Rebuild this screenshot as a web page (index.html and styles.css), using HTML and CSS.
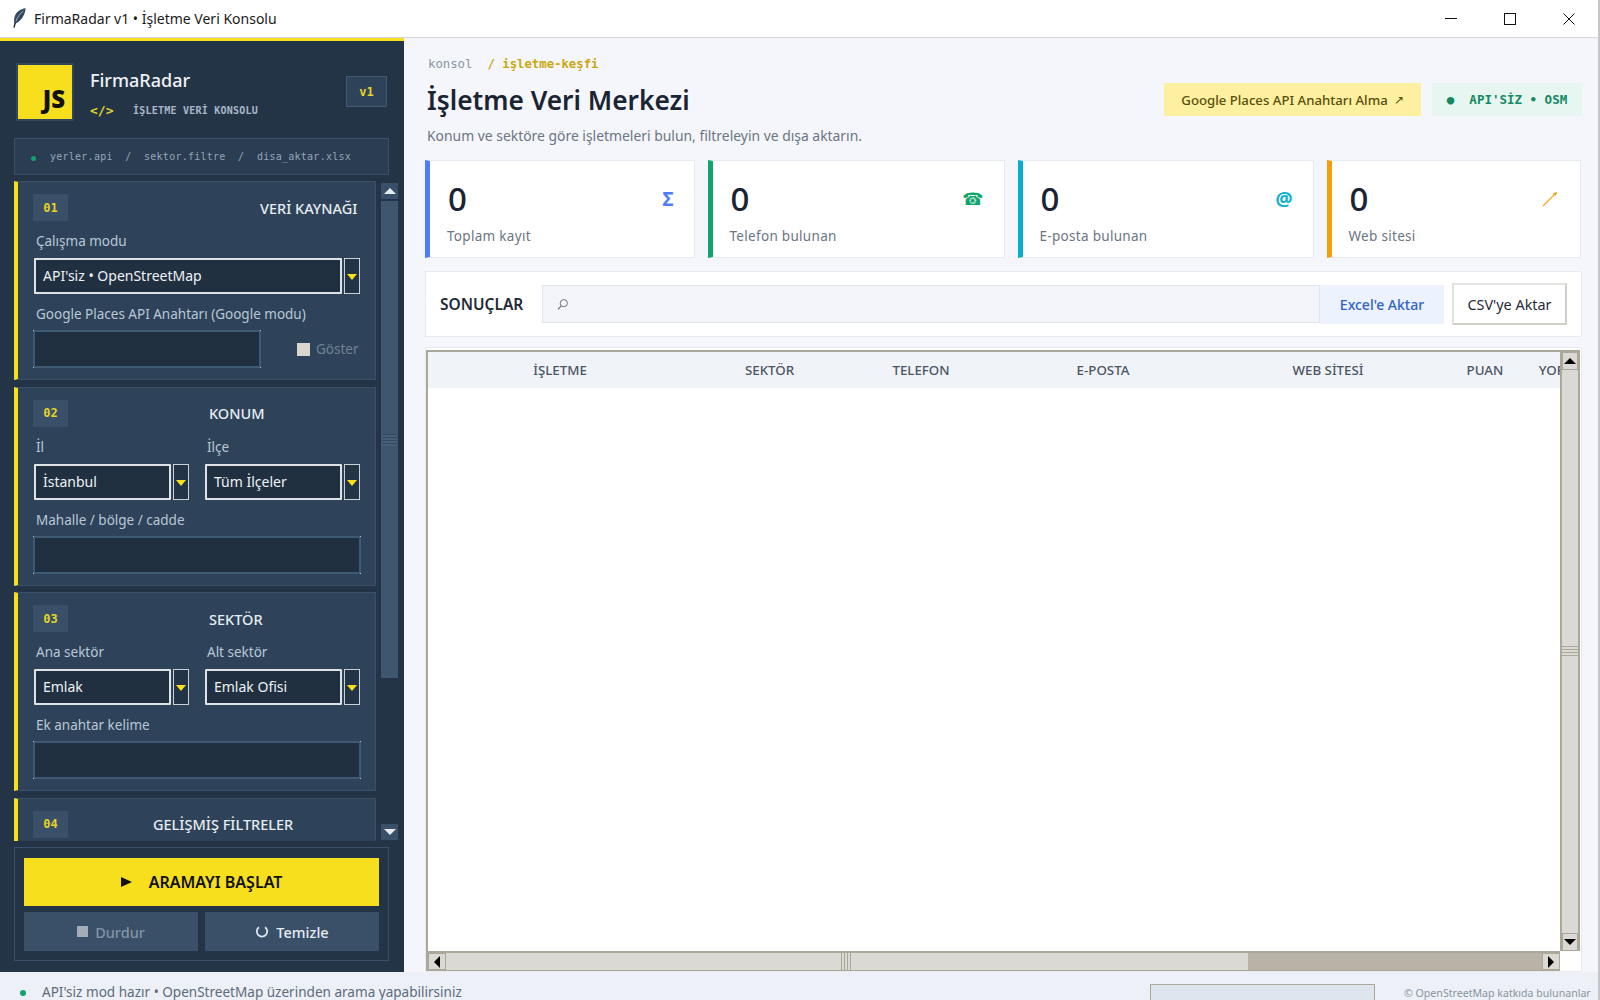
FILE: index.html
```html
<!DOCTYPE html>
<html lang="tr">
<head>
    <meta charset="UTF-8">
    <meta name="viewport" content="width=device-width, initial-scale=1.0">
    <title>FirmaRadar v1</title>
    <link rel="stylesheet" href="styles.css">
</head>
<body>
<div class="window">

    <!-- pencere başlığı -->
    <header class="titlebar">
        <svg class="feather" width="13" height="20" viewBox="0 0 13 20">
            <path d="M12.6 0.3C7.5 0.8 2.8 4.2 1.4 9.4 0.8 11.8 1 14 1.8 15.4 3 15.6 4.6 14.8 5.8 13.6 9.6 10.6 12.2 5.6 12.6 0.3Z" fill="#34485c"/>
            <path d="M10.4 3C7 5.6 4.2 9.2 2.9 13.4" stroke="#a9c0d6" stroke-width="0.9" fill="none"/>
            <path d="M2.4 14.2L1 19.6" stroke="#1c2630" stroke-width="1.4" fill="none"/>
        </svg>
        <span class="titlebar-text">FirmaRadar v1 • İşletme Veri Konsolu</span>
        <div class="caption">
            <div class="cap-btn"><span class="cap-min"></span></div>
            <div class="cap-btn"><span class="cap-max"></span></div>
            <div class="cap-btn">
                <svg width="12" height="12" viewBox="0 0 12 12"><path d="M0.5 0.5L11.5 11.5M11.5 0.5L0.5 11.5" stroke="#111" stroke-width="1" fill="none"/></svg>
            </div>
        </div>
    </header>

    <div class="app">
        <!-- sol panel -->
        <aside class="sidebar">
            <div class="brand">
                <div class="logo"><span>JS</span></div>
                <div class="brand-text">
                    <div class="brand-name">FirmaRadar</div>
                    <div class="brand-sub"><span class="brand-code">&lt;/&gt;</span><span class="brand-label">İŞLETME VERİ KONSOLU</span></div>
                </div>
                <div class="version">v1</div>
            </div>

            <div class="path-box"><span class="path-dot"></span><span class="path-text">yerler.api  /  sektor.filtre  /  disa_aktar.xlsx</span></div>

            <div class="side-scroll">
                <div class="sections">
                    <section class="sec">
                        <div class="sec-head">
                            <span class="sec-num">01</span>
                            <h3 class="sec-title sec-title-source">VERİ KAYNAĞI</h3>
                        </div>
                        <label class="lbl">Çalışma modu</label>
                        <div class="combo">
                            <div class="combo-field">API'siz • OpenStreetMap</div>
                            <div class="combo-arrow"></div>
                        </div>
                        <label class="lbl lbl-next">Google Places API Anahtarı (Google modu)</label>
                        <div class="key-row">
                            <div class="entry entry-key"></div>
                            <div class="check"><span class="check-box"></span><span class="check-text">Göster</span></div>
                        </div>
                    </section>

                    <section class="sec">
                        <div class="sec-head">
                            <span class="sec-num">02</span>
                            <h3 class="sec-title sec-title-mid">KONUM</h3>
                        </div>
                        <div class="two-col">
                            <div>
                                <label class="lbl">İl</label>
                                <div class="combo">
                                    <div class="combo-field">İstanbul</div>
                                    <div class="combo-arrow"></div>
                                </div>
                            </div>
                            <div>
                                <label class="lbl">İlçe</label>
                                <div class="combo">
                                    <div class="combo-field">Tüm İlçeler</div>
                                    <div class="combo-arrow"></div>
                                </div>
                            </div>
                        </div>
                        <label class="lbl lbl-next">Mahalle / bölge / cadde</label>
                        <div class="entry"></div>
                    </section>

                    <section class="sec">
                        <div class="sec-head">
                            <span class="sec-num">03</span>
                            <h3 class="sec-title sec-title-mid">SEKTÖR</h3>
                        </div>
                        <div class="two-col">
                            <div>
                                <label class="lbl">Ana sektör</label>
                                <div class="combo">
                                    <div class="combo-field">Emlak</div>
                                    <div class="combo-arrow"></div>
                                </div>
                            </div>
                            <div>
                                <label class="lbl">Alt sektör</label>
                                <div class="combo">
                                    <div class="combo-field">Emlak Ofisi</div>
                                    <div class="combo-arrow"></div>
                                </div>
                            </div>
                        </div>
                        <label class="lbl lbl-next">Ek anahtar kelime</label>
                        <div class="entry"></div>
                    </section>

                    <section class="sec">
                        <div class="sec-head">
                            <span class="sec-num">04</span>
                            <h3 class="sec-title sec-title-filter">GELİŞMİŞ FİLTRELER</h3>
                        </div>
                    </section>
                </div>

                <div class="side-bar">
                    <div class="side-btn"><span class="tri-up"></span></div>
                    <div class="side-track">
                        <div class="side-thumb"><span class="side-grip"></span></div>
                    </div>
                    <div class="side-btn"><span class="tri-down"></span></div>
                </div>
            </div>

            <div class="actions">
                <button class="btn-start"><span class="play"></span>ARAMAYI BAŞLAT</button>
                <div class="action-row">
                    <button class="btn-side btn-stop"><span class="stop-box"></span>Durdur</button>
                    <button class="btn-side">
                        <svg width="14" height="14" viewBox="0 0 14 14"><path d="M4 2.2A5.2 5.2 0 1 0 10 2.2" stroke="#dce5ee" stroke-width="1.8" fill="none"/></svg>
                        Temizle
                    </button>
                </div>
            </div>
        </aside>

        <!-- ana içerik -->
        <main class="content">
            <div class="top">
                <div class="top-left">
                    <div class="crumb"><span class="crumb-root">konsol</span><span class="crumb-page">/ işletme-keşfi</span></div>
                    <h1 class="page-title">İşletme Veri Merkezi</h1>
                    <p class="page-sub">Konum ve sektöre göre işletmeleri bulun, filtreleyin ve dışa aktarın.</p>
                </div>
                <div class="top-right">
                    <a class="key-link">Google Places API Anahtarı Alma <span class="key-arrow">↗</span></a>
                    <div class="mode-tag">●  API'SİZ • OSM</div>
                </div>
            </div>

            <div class="cards">
                <div class="card card-blue">
                    <div><div class="card-num">0</div><div class="card-lbl">Toplam kayıt</div></div>
                    <span class="card-icon icon-blue">Σ</span>
                </div>
                <div class="card card-green">
                    <div><div class="card-num">0</div><div class="card-lbl">Telefon bulunan</div></div>
                    <span class="card-icon icon-green">☎</span>
                </div>
                <div class="card card-cyan">
                    <div><div class="card-num">0</div><div class="card-lbl">E-posta bulunan</div></div>
                    <span class="card-icon icon-cyan">@</span>
                </div>
                <div class="card card-orange">
                    <div><div class="card-num">0</div><div class="card-lbl">Web sitesi</div></div>
                    <svg class="card-svg" width="16" height="16" viewBox="0 0 16 16"><path d="M1 15L14 2" stroke="#f5a623" stroke-width="1.2" fill="none"/><path d="M15.2 0.8L11 2.4L13.6 5Z" fill="#f59e0b"/></svg>
                </div>
            </div>

            <div class="toolbar">
                <span class="toolbar-title">SONUÇLAR</span>
                <div class="search">
                    <svg width="13" height="13" viewBox="0 0 13 13"><circle cx="7.8" cy="5.2" r="3.6" stroke="#6b7583" stroke-width="1" fill="none"/><path d="M5.2 7.9L2 11.4" stroke="#6b7583" stroke-width="1.2" fill="none"/></svg>
                </div>
                <button class="btn-excel">Excel'e Aktar</button>
                <button class="btn-csv">CSV'ye Aktar</button>
            </div>

            <div class="table-panel">
                <div class="table-top">
                    <div class="tree">
                        <div class="tree-head">
                            <span class="col col-name">İŞLETME</span>
                            <span class="col col-sector">SEKTÖR</span>
                            <span class="col col-phone">TELEFON</span>
                            <span class="col col-mail">E-POSTA</span>
                            <span class="col col-web">WEB SİTESİ</span>
                            <span class="col col-score">PUAN</span>
                            <span class="col col-review">YORUM</span>
                        </div>
                    </div>
                    <div class="vbar">
                        <div class="tk-btn"><span class="tk-up"></span></div>
                        <div class="vbar-thumb"><span class="vbar-grip"></span></div>
                        <div class="tk-btn"><span class="tk-down"></span></div>
                    </div>
                </div>
                <div class="table-bottom">
                    <div class="hbar">
                        <div class="tk-btn"><span class="tk-left"></span></div>
                        <div class="hbar-thumb"><span class="hbar-grip"></span></div>
                        <div class="hbar-trough"></div>
                        <div class="tk-btn"><span class="tk-right"></span></div>
                    </div>
                    <div class="corner"></div>
                </div>
            </div>
        </main>
    </div>

    <footer class="statusbar">
        <span class="status-dot"></span>
        <span class="status-text">API'siz mod hazır • OpenStreetMap üzerinden arama yapabilirsiniz</span>
        <div class="progress"></div>
        <span class="status-copy">© OpenStreetMap katkıda bulunanlar</span>
    </footer>
</div>
</body>
</html>
```

FILE: styles.css
```css
*{
    box-sizing: border-box;
    padding: 0;
    margin: 0;
}
html, body{
    height: 100%;
    overflow: hidden;
}
body{
    font-family: "Noto Sans", "Open Sans", sans-serif;
    background-color: #f4f6fb;
}
button{
    font-family: inherit;
    border: 0;
}
.window{
    height: 1000px;
    display: flex;
    flex-direction: column;
    border-right: 2px solid #c4c6ca;
    overflow: hidden;
}

/* başlık */
.titlebar{
    height: 38px;
    flex: none;
    display: flex;
    align-items: center;
    background-color: #fff;
    border-bottom: 1px solid #d5d7db;
    padding-left: 13px;
}
.feather{
    margin-right: 8px;
    margin-top: -2px;
}
.titlebar-text{
    font-size: 14px;
    color: #1a1a1a;
}
.caption{
    margin-left: auto;
    display: flex;
}
.cap-btn{
    width: 59px;
    height: 37px;
    display: flex;
    align-items: center;
    justify-content: center;
}
.cap-min{
    width: 12px;
    height: 1px;
    background-color: #111;
}
.cap-max{
    width: 12px;
    height: 12px;
    border: 1px solid #111;
}

.app{
    flex: 1;
    min-height: 0;
    display: flex;
}

/* sol panel */
.sidebar{
    width: 404px;
    flex: none;
    background-color: #243447;
    border-top: 3px solid #f7df1e;
    padding: 22px 15px 0 14px;
    display: flex;
    flex-direction: column;
}
.brand{
    height: 58px;
    display: flex;
    flex: none;
}
.logo{
    width: 58px;
    height: 58px;
    margin-left: 2px;
    border: 2px solid #31465c;
    background-color: #f7df1e;
    display: flex;
    align-items: flex-end;
    justify-content: flex-end;
    padding: 0 7px 10px 0;
}
.logo span{
    font-size: 24px;
    line-height: 20px;
    font-weight: 900;
    color: #111;
}
.brand-text{
    margin-left: 16px;
}
.brand-name{
    font-size: 18px;
    line-height: 24px;
    margin-top: 5px;
    font-weight: 500;
    color: #eef2f6;
}
.brand-sub{
    display: flex;
    align-items: center;
    margin-top: 11px;
}
.brand-code{
    font-family: "DejaVu Sans Mono", monospace;
    font-size: 13px;
    font-weight: 700;
    color: #e3d32a;
    width: 43px;
}
.brand-label{
    font-family: "DejaVu Sans Mono", monospace;
    font-size: 10px;
    font-weight: 700;
    letter-spacing: 0.23px;
    color: #a9b8c8;
}
.version{
    margin-left: auto;
    margin-right: 2px;
    margin-top: 13px;
    width: 41px;
    height: 31px;
    border: 1px solid #3f5a75;
    background-color: #2e4359;
    color: #e3d32a;
    font-family: "DejaVu Sans Mono", monospace;
    font-size: 12px;
    font-weight: 700;
    display: flex;
    align-items: center;
    justify-content: center;
}
.path-box{
    flex: none;
    margin-top: 17px;
    height: 37px;
    border: 1px solid #3a5068;
    background-color: #2a3d52;
    display: flex;
    align-items: center;
    padding-left: 16px;
}
.path-dot{
    width: 5px;
    height: 5px;
    margin-top: 4px;
    margin-right: 14px;
    background-color: #12a26c;
    border-radius: 50%;
}
.path-text{
    font-family: "DejaVu Sans Mono", monospace;
    font-size: 10px;
    letter-spacing: 0.25px;
    white-space: pre;
    color: #93a6b9;
}
.side-scroll{
    flex: none;
    margin-top: 6px;
    width: 384px;
    height: 660px;
    display: flex;
}
.sections{
    width: 362px;
    flex: none;
    height: 660px;
    overflow: hidden;
    display: flex;
    flex-direction: column;
    gap: 6.5px;
}
.sec{
    flex: none;
    height: 199px;
    background-color: #2e4359;
    border: 1px solid #3a5068;
    border-left: 4px solid #f7df1e;
    padding: 12px 14px 0 15px;
}
.sec-head{
    display: flex;
    align-items: center;
    height: 27px;
    margin-bottom: 11px;
}
.sec-num{
    width: 35px;
    height: 27px;
    background-color: #3a5068;
    color: #e3d32a;
    font-family: "DejaVu Sans Mono", monospace;
    font-size: 12px;
    font-weight: 700;
    display: flex;
    align-items: center;
    justify-content: center;
}
.sec-title{
    font-size: 14.5px;
    font-weight: 500;
    white-space: nowrap;
    color: #e6ecf2;
}
.sec-title-source{
    margin-left: 192px;
}
.sec-title-mid{
    margin-left: 141px;
}
.sec-title-filter{
    margin-left: 85px;
}
.lbl{
    display: block;
    height: 18px;
    line-height: 18px;
    font-size: 13.5px;
    padding-left: 3px;
    color: #b9c7d6;
    margin-bottom: 8px;
}
.lbl-next{
    margin-top: 11px;
    margin-bottom: 7px;
}
.combo{
    display: flex;
    height: 36px;
    margin: 0 1px;
}
.combo-field{
    flex: 1;
    min-width: 0;
    border: 2px solid #dfe3e6;
    border-radius: 1px;
    background-color: #203040;
    color: #eef2f6;
    font-size: 14px;
    line-height: 32px;
    padding-left: 7px;
}
.combo-arrow{
    width: 16px;
    margin-left: 2px;
    flex: none;
    border: 1px solid #c9d0d6;
    background-color: #243447;
    position: relative;
}
.combo-arrow::after{
    content: "";
    position: absolute;
    left: 2px;
    top: 15px;
    border-left: 5px solid transparent;
    border-right: 5px solid transparent;
    border-top: 6px solid #f7df1e;
}
.entry{
    height: 38px;
    border: 2px solid #3f5a75;
    background-color: #203040;
    position: relative;
}
/* köşelerdeki açık noktalar */
.entry::after{
    content: "";
    position: absolute;
    inset: -2px;
    background:
        linear-gradient(#b4c0cc, #b4c0cc) left top / 1px 1px no-repeat,
        linear-gradient(#b4c0cc, #b4c0cc) right top / 1px 1px no-repeat,
        linear-gradient(#b4c0cc, #b4c0cc) left bottom / 1px 1px no-repeat,
        linear-gradient(#b4c0cc, #b4c0cc) right bottom / 1px 1px no-repeat;
}
.key-row{
    display: flex;
    align-items: center;
}
.entry-key{
    width: 228px;
}
.check{
    margin-left: 36px;
    display: flex;
    align-items: center;
    gap: 6px;
}
.check-box{
    width: 13px;
    height: 13px;
    background-color: #d9d6d0;
}
.check-text{
    font-size: 13.5px;
    color: #6f8192;
}
.two-col{
    display: grid;
    grid-template-columns: 1fr 1fr;
    gap: 14px;
}

/* panel kaydırma çubuğu */
.side-bar{
    margin-left: 5px;
    width: 17px;
    display: flex;
    flex-direction: column;
    padding-top: 2px;
    padding-bottom: 1px;
}
.side-btn{
    height: 16px;
    flex: none;
    background-color: #3a5068;
    display: flex;
    align-items: center;
    justify-content: center;
}
.tri-up, .tri-down{
    width: 0;
    height: 0;
    border-left: 6px solid transparent;
    border-right: 6px solid transparent;
}
.tri-up{
    border-bottom: 6px solid #e6ebef;
}
.tri-down{
    border-top: 6px solid #e6ebef;
}
.side-track{
    flex: 1;
    padding-top: 2px;
}
.side-thumb{
    height: 477px;
    background-color: #3e576f;
    display: flex;
    align-items: center;
    justify-content: center;
}
.side-grip{
    width: 15px;
    height: 12px;
    background: repeating-linear-gradient(#33495f 0 1px, #46607a 1px 3px);
}

/* aksiyon kutusu */
.actions{
    flex: none;
    margin-top: 6px;
    height: 114px;
    border: 1px solid #3a5068;
    padding: 10px 9px 9px;
}
.btn-start{
    width: 100%;
    height: 48px;
    background-color: #f7df1e;
    color: #111;
    font-size: 16px;
    font-weight: 600;
    display: flex;
    align-items: center;
    justify-content: center;
}
.play{
    width: 0;
    height: 0;
    margin-right: 17px;
    border-top: 5px solid transparent;
    border-bottom: 5px solid transparent;
    border-left: 11px solid #111;
}
.action-row{
    margin-top: 6px;
    display: grid;
    grid-template-columns: 1fr 1fr;
    gap: 7px;
}
.btn-side{
    height: 39px;
    background-color: #3a5068;
    color: #e6ecf2;
    font-size: 14.5px;
    font-weight: 500;
    display: flex;
    align-items: center;
    justify-content: center;
    gap: 7px;
}
.btn-stop{
    color: #8394a5;
}
.stop-box{
    width: 11px;
    height: 11px;
    background-color: #a3adb8;
}

/* ana içerik */
.content{
    flex: 1;
    min-width: 0;
    padding: 0 16px 0 21px;
    display: flex;
    flex-direction: column;
}
.top{
    height: 122px;
    flex: none;
    display: flex;
    justify-content: space-between;
}
.crumb{
    margin-top: 18px;
    padding-left: 3px;
    font-family: "DejaVu Sans Mono", monospace;
    font-size: 12.3px;
    line-height: 16px;
}
.crumb-root{
    color: #8a94a3;
    margin-right: 15px;
}
.crumb-page{
    color: #c9a80f;
    font-weight: 700;
}
.page-title{
    margin-top: 9px;
    padding-left: 2px;
    font-size: 26.3px;
    line-height: 38px;
    font-weight: 600;
    color: #1b2433;
}
.page-sub{
    margin-top: 7px;
    padding-left: 2px;
    font-size: 13.9px;
    line-height: 20px;
    color: #6b7583;
}
.top-right{
    margin-top: 45px;
    display: flex;
    gap: 11px;
    height: 33px;
}
.key-link{
    width: 257px;
    background-color: #fdf0a0;
    color: #5a4d0a;
    font-size: 13.2px;
    font-weight: 500;
    display: flex;
    align-items: center;
    justify-content: center;
    gap: 6px;
}
.key-arrow{
    font-size: 12px;
}
.mode-tag{
    width: 150px;
    background-color: #e8f6f1;
    color: #138a63;
    font-family: "DejaVu Sans Mono", monospace;
    font-size: 12.5px;
    font-weight: 700;
    white-space: pre;
    display: flex;
    align-items: center;
    justify-content: center;
}
.cards{
    flex: none;
    display: grid;
    grid-template-columns: 269.5px 297px 296px 254.5px;
    gap: 13px;
    height: 98px;
}
.card{
    background-color: #fff;
    border: 1px solid #e6eaf1;
    border-left-width: 5px;
    padding: 16px 20px 0 17px;
    display: flex;
    justify-content: space-between;
}
.card-blue{
    border-left-color: #4f7cff;
}
.card-green{
    border-left-color: #10a56d;
}
.card-cyan{
    border-left-color: #06b0cc;
}
.card-orange{
    border-left-color: #f59e0b;
}
.card-num{
    font-size: 33px;
    line-height: 44px;
    font-weight: 500;
    padding-left: 1px;
    color: #1b2433;
}
.card-lbl{
    margin-top: 6px;
    font-size: 13.5px;
    line-height: 18px;
    letter-spacing: 0.3px;
    color: #6b7583;
}
.card-icon{
    margin-top: 9px;
    font-size: 19px;
    line-height: 26px;
    font-weight: 700;
}
.card-svg{
    margin-top: 14px;
    margin-right: 2px;
}
.icon-blue{
    color: #4f7cff;
}
.icon-green{
    color: #10a56d;
    font-size: 17px;
    font-family: "DejaVu Sans", sans-serif;
}
.icon-cyan{
    color: #06b0cc;
}
.toolbar{
    flex: none;
    margin-top: 13px;
    height: 66px;
    background-color: #fff;
    border: 1px solid #e6eaf1;
    display: flex;
    align-items: center;
    padding: 0 14px 0 14px;
}
.toolbar-title{
    width: 102px;
    flex: none;
    font-size: 15.5px;
    font-weight: 600;
    color: #1f2937;
}
.search{
    width: 778px;
    height: 38px;
    background-color: #f3f5fa;
    border: 1px solid #e1e5ee;
    display: flex;
    align-items: center;
    padding-left: 13px;
}
.btn-excel{
    width: 124px;
    height: 39px;
    background-color: #ecf2fe;
    color: #2f62c9;
    font-size: 14px;
    font-weight: 500;
}
.btn-csv{
    margin-left: 8px;
    width: 115px;
    height: 42px;
    background-color: #fff;
    border: 2px solid #e3e3df;
    border-right-color: #cfcfca;
    border-bottom-color: #cfcfca;
    color: #1f2937;
    font-size: 14.4px;
}

/* tablo */
.table-panel{
    flex: none;
    margin-top: 10px;
    height: 625px;
    background-color: #fff;
    border: 1px solid #e6eaf1;
    padding: 2px 1px 0 0;
    display: flex;
    flex-direction: column;
}
.table-top{
    height: 601px;
    display: flex;
}
.tree{
    flex: 1;
    min-width: 0;
    overflow: hidden;
    border-top: 2px solid #aca899;
    border-left: 2px solid #aca899;
    background-color: #fff;
}
.tree-head{
    height: 36px;
    display: flex;
    background-color: #f0f3f8;
}
.col{
    flex: none;
    font-size: 13.3px;
    font-weight: 500;
    line-height: 36px;
    text-align: center;
    color: #4b5563;
}
.col-name{
    width: 264px;
}
.col-sector{
    width: 155px;
}
.col-phone{
    width: 148px;
}
.col-mail{
    width: 216px;
}
.col-web{
    width: 234px;
}
.col-score{
    width: 80px;
}
.col-review{
    width: 76px;
}
.vbar{
    width: 20px;
    flex: none;
    display: flex;
    flex-direction: column;
    border: 2px solid #aca899;
    border-bottom: 0;
    background-color: #b8b3a6;
}
.tk-btn{
    width: 18px;
    height: 18px;
    flex: none;
    background-color: #dbd9d3;
    border: 1px solid #aca899;
    display: flex;
    align-items: center;
    justify-content: center;
}
.vbar .tk-btn{
    width: 100%;
    height: 18px;
}
.tk-up{
    border-left: 6px solid transparent;
    border-right: 6px solid transparent;
    border-bottom: 6px solid #000;
}
.tk-down{
    border-left: 6px solid transparent;
    border-right: 6px solid transparent;
    border-top: 6px solid #000;
}
.tk-left{
    border-top: 6px solid transparent;
    border-bottom: 6px solid transparent;
    border-right: 6px solid #000;
}
.tk-right{
    border-top: 6px solid transparent;
    border-bottom: 6px solid transparent;
    border-left: 6px solid #000;
}
.vbar-thumb{
    flex: 1;
    background-color: #dbd9d3;
    display: flex;
    align-items: center;
    justify-content: center;
}
.vbar-grip{
    width: 100%;
    height: 12px;
    background: repeating-linear-gradient(#aca899 0 1px, #dbd9d3 1px 3px);
}
.table-bottom{
    height: 20px;
    display: flex;
}
.hbar{
    flex: 1;
    min-width: 0;
    display: flex;
    border: 2px solid #aca899;
    border-right: 0;
    border-bottom: 1px solid #aca899;
    background-color: #b8b3a6;
}
.hbar .tk-btn{
    height: 100%;
}
.hbar-thumb{
    width: 802px;
    background-color: #dbd9d3;
    display: flex;
    align-items: center;
    justify-content: center;
}
.hbar-grip{
    width: 12px;
    height: 100%;
    background: repeating-linear-gradient(90deg, #aca899 0 1px, #dbd9d3 1px 3px);
}
.hbar-trough{
    flex: 1;
}
.corner{
    width: 20px;
    flex: none;
}

/* durum çubuğu */
.statusbar{
    height: 28px;
    flex: none;
    background-color: #edf0f6;
    display: flex;
    align-items: flex-start;
    padding-left: 20px;
    position: relative;
}
.status-dot{
    width: 6px;
    height: 6px;
    margin-top: 18px;
    margin-right: 16px;
    background-color: #12a26c;
    border-radius: 50%;
}
.status-text{
    margin-top: 11px;
    font-size: 13.55px;
    line-height: 18px;
    color: #5d6b7c;
}
.progress{
    position: absolute;
    left: 1150px;
    top: 12px;
    width: 225px;
    height: 24px;
    background-color: #dfe5ee;
    border: 1px solid #aca899;
}
.status-copy{
    position: absolute;
    left: 1404px;
    top: 13px;
    font-size: 10.6px;
    line-height: 16px;
    white-space: nowrap;
    color: #8a94a3;
}
```
